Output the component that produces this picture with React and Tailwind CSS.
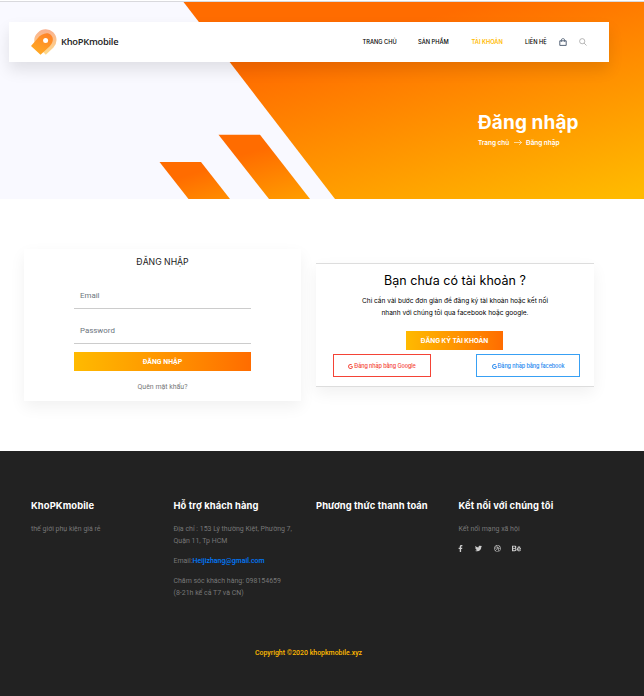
import React from "react";
import { FaFacebookF, FaTwitter, FaDribbble, FaBehance, FaGoogle } from "react-icons/fa";

function HeroBackground() {
  return (
    <svg className="absolute inset-0 h-full w-full" viewBox="0 2 644 197" preserveAspectRatio="none" aria-hidden="true">
      <defs>
        <linearGradient id="sweep" gradientUnits="userSpaceOnUse" x1="320" y1="48" x2="381" y2="265">
          <stop offset="0" stopColor="#ff6c00" />
          <stop offset="1" stopColor="#ffba00" />
        </linearGradient>
        <linearGradient id="bar" gradientUnits="userSpaceOnUse" x1="240" y1="155" x2="256" y2="212">
          <stop offset="0" stopColor="#ff6c00" />
          <stop offset="1" stopColor="#ff9c00" />
        </linearGradient>
        <linearGradient id="barSmall" gradientUnits="userSpaceOnUse" x1="185" y1="176" x2="197" y2="216">
          <stop offset="0" stopColor="#ff6c00" />
          <stop offset="1" stopColor="#ff9400" />
        </linearGradient>
      </defs>
      <path d="M183.500 2H644V199H335Z" fill="url(#sweep)" />
      <path d="M218.500 134.700H260L310 199H269Z" fill="url(#bar)" />
      <path d="M159.500 162H201L230 199H188.500Z" fill="url(#barSmall)" />
    </svg>
  );
}

function Logo() {
  return (
    <svg className="h-[27px] w-[26px] shrink-0" viewBox="0 0 26 27" aria-hidden="true">
      <defs>
        <linearGradient id="pin" x1="0.2" y1="1" x2="0.7" y2="0">
          <stop offset="0" stopColor="#ffad24" />
          <stop offset="1" stopColor="#ff8428" />
        </linearGradient>
        <linearGradient id="halo" x1="0" y1="0" x2="0" y2="1">
          <stop offset="0" stopColor="#f9b08e" />
          <stop offset="1" stopColor="#ffdb8c" />
        </linearGradient>
      </defs>
      <path d="M7 3.500A10.500 10.500 0 0 1 22.500 18.500L14.800 25.700L4 15A10.500 10.500 0 0 1 7 3.500Z" fill="url(#halo)" />
      <path d="M6.500 9.500C10 5 16.500 2.500 20 6C23.500 9.500 21.500 14.500 18.500 17.500L9.500 25.700L0 17Z" fill="url(#pin)" />
      <circle cx="14.600" cy="11.500" r="2.500" fill="#fff" />
    </svg>
  );
}

function BagIcon() {
  return (
    <svg className="h-[8px] w-[8px]" viewBox="0 0 8 8" fill="none" stroke="#44546a" aria-hidden="true">
      <path d="M.8 2.800H7.200V7.400H.8Z" strokeWidth=".9" />
      <path d="M2.300 4V2C2.300 .1 5.700 .1 5.700 2V4" strokeWidth=".7" />
    </svg>
  );
}

function SearchIcon() {
  return (
    <svg className="h-[8px] w-[8px]" viewBox="0 0 8 8" fill="none" stroke="#999" strokeWidth=".7" aria-hidden="true">
      <circle cx="3.200" cy="3.200" r="2.600" />
      <path d="M5.100 5.100L7.500 7.500" />
    </svg>
  );
}

function Header() {
  return (
    <header className="relative flex h-[40px] w-[600px] items-center bg-white pl-[22px] shadow-[0_8px_15px_rgba(0,0,0,0.1)]">
      <Logo />
      <span className="ml-[4px] w-[301.500px] whitespace-nowrap font-['Open_Sans',sans-serif] text-[9.300px] font-semibold tracking-[-0.250px] text-[#222]">KhoPKmobile</span>
      <nav className="flex items-center whitespace-nowrap font-['Inter',sans-serif] text-[5.700px] font-medium leading-[10px] text-black">
        <a className="w-[55.500px]">TRANG CHỦ</a>
        <a className="w-[53.500px]">SẢN PHẨM</a>
        <a className="w-[53.500px] font-semibold text-[#ffba00]">TÀI KHOẢN</a>
        <a className="w-[33.500px]">LIÊN HỆ</a>
      </nav>
      <BagIcon />
      <span className="ml-[12px]"><SearchIcon /></span>
    </header>
  );
}

function Hero() {
  return (
    <section className="relative h-[198px] border-t border-[#d9d9dd] bg-[#f9f9ff] pl-[9px] pt-[20px]">
      <HeroBackground />
      <Header />
      <div className="relative ml-[469px] mt-[48px] whitespace-nowrap font-['Inter',sans-serif] text-white">
        <h1 className="text-[19px] font-bold leading-[26px] tracking-[0.100px]">Đăng nhập</h1>
        <div className="mt-[2px] flex items-center text-[6.500px] font-semibold leading-[10px]">
          <span className="w-[36px] tracking-[-0.050px]">Trang chủ</span>
          <svg className="mr-[4px] h-[6px] w-[8px]" viewBox="0 0 8 6" fill="none" stroke="currentColor" strokeWidth=".6" aria-hidden="true">
            <path d="M0 2.500H7.500M5 0L7.500 2.500L5 5" />
          </svg>
          <span className="tracking-[-0.050px]">Đăng nhập</span>
        </div>
      </div>
    </section>
  );
}

function LoginCard() {
  return (
    <form className="flex h-[152px] w-[277px] flex-col items-center bg-white pt-[5px] font-['Roboto',sans-serif] shadow-[0_6px_15px_rgba(0,0,0,0.06)]">
      <h3 className="font-['Inter',sans-serif] text-[8.700px] leading-[16px] text-[#222]">ĐĂNG NHẬP</h3>
      <div className="mt-[12px] h-[27px] w-[177px] border-b border-[#ccc] pl-[6px] text-[7.900px] leading-[27px] text-[#6c757d]">Email</div>
      <div className="mt-[8px] h-[27px] w-[177px] border-b border-[#ccc] pl-[6px] text-[7.900px] leading-[27px] text-[#6c757d]">Password</div>
      <button type="button" className="mt-[8px] h-[19px] w-[177px] bg-linear-to-r from-[#ffba00] to-[#ff6c00] text-[6.900px] font-bold leading-[20px] text-white">ĐĂNG NHẬP</button>
      <a className="mt-[10px] text-[6.950px] leading-[12px] text-[#777]">Quên mật khẩu?</a>
    </form>
  );
}

function RegisterCard() {
  return (
    <div className="mt-[14px] flex h-[124px] w-[278px] flex-col items-center whitespace-nowrap border-y border-[#ddd] bg-white pt-[8px] font-['Inter',sans-serif] shadow-[0_6px_15px_rgba(0,0,0,0.06)]">
      <h4 className="text-[12.500px] leading-[18px] tracking-[0.050px] text-black">Bạn chưa có tài khoản ?</h4>
      <p className="mt-[5px] text-center text-[6.550px] leading-[12px] text-black">
        Chỉ cần vài bước đơn giản để đăng ký tài khoản hoặc kết nối<br />nhanh với chúng tôi qua facebook hoặc google.
      </p>
      <button type="button" className="mr-[1px] mt-[12px] h-[19px] w-[97px] bg-linear-to-r from-[#ffba00] to-[#ff6c00] text-[6.500px] font-bold leading-[20px] tracking-[-0.030px] text-white">ĐĂNG KÝ TÀI KHOẢN</button>
      <div className="mt-[4px] flex w-full justify-between pl-[17px] pr-[14px] text-[5.500px] font-medium tracking-[-0.100px]">
        <a className="flex h-[22.500px] w-[98px] items-center justify-center gap-[1px] border border-[#f44336] pt-[2px] text-[#f44336]"><FaGoogle className="h-[5px] w-[5px]" />Đăng nhập bằng Google</a>
        <a className="flex h-[22.500px] w-[104px] items-center justify-center gap-[1px] border border-[#38a0f4] pt-[2px] text-[#2186ef]"><FaGoogle className="h-[5px] w-[5px]" />Đăng nhập bằng facebook</a>
      </div>
    </div>
  );
}

function FooterColumn({ title, children }) {
  return (
    <div className="w-[142.500px] whitespace-nowrap">
      <h6 className="font-['Inter',sans-serif] text-[9.400px] font-bold leading-[14px] tracking-[0.100px] text-white">{title}</h6>
      <div className="mt-[10px] text-[6.980px] leading-[12px] text-[#777]">{children}</div>
    </div>
  );
}

function Footer() {
  return (
    <footer className="h-[245px] bg-[#222] pl-[31px] pt-[48px] font-['Roboto',sans-serif]">
      <div className="flex h-[149px]">
        <FooterColumn title="KhoPKmobile">thế giới phụ kiện giá rẻ</FooterColumn>
        <FooterColumn title="Hỗ trợ khách hàng">
          <p>Địa chỉ : 153 Lý thường Kiệt, Phường 7,<br />Quận 11, Tp HCM</p>
          <p className="mt-[8px]">Email:<a className="font-medium text-[#007bff]">Heijizhang@gmail.com</a></p>
          <p className="mt-[8px]">Chăm sóc khách hàng: 098154659<br />(8-21h kể cả T7 và CN)</p>
        </FooterColumn>
        <FooterColumn title="Phương thức thanh toán" />
        <FooterColumn title="Kết nối với chúng tôi">
          <p>Kết nối mạng xã hội</p>
          <div className="mt-[9px] flex items-center text-[#ccc]">
            <FaFacebookF className="-ml-[0.500px] mr-[12px] h-[7px] w-[5px]" />
            <FaTwitter className="mr-[12px] h-[7px] w-[7px]" />
            <FaDribbble className="mr-[11px] h-[7px] w-[7px]" />
            <FaBehance className="h-[9px] w-[9px]" />
          </div>
        </FooterColumn>
      </div>
      <p className="w-[555px] text-center text-[6.950px] font-medium leading-[10px] text-[#ffba00]">Copyright ©2020 khopkmobile.xyz</p>
    </footer>
  );
}

export default function App() {
  return (
    <div className="h-[696px] w-[644px] overflow-hidden bg-white pt-px">
      <Hero />
      <main className="flex h-[252px] items-start gap-[15px] pl-[24px] pt-[50px]">
        <LoginCard />
        <RegisterCard />
      </main>
      <Footer />
    </div>
  );
}
